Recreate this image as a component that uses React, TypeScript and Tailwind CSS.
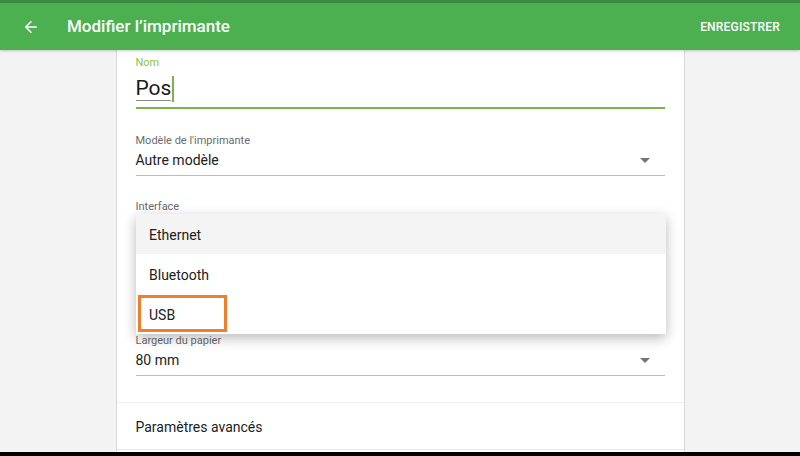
import { ArrowLeft } from "lucide-react";

const font = { fontFamily: "Roboto, 'Liberation Sans', sans-serif" };

function Caret() {
  return (
    <svg width="10" height="5" viewBox="0 0 10 5" className="shrink-0">
      <path d="M0 0 L10 0 L5 5 Z" fill="#757575" />
    </svg>
  );
}

function SelectField({ label, value }: { label: string; value?: string }) {
  return (
    <div>
      <div className="h-[14px] text-[11px] leading-[14px] text-[#6b6b6b]">{label}</div>
      <div className="mt-[2px] h-[20px] flex items-center justify-between pr-[15px]">
        <span className="text-[14px] text-[#212121]">{value}</span>
        <Caret />
      </div>
      <div className="mt-[5px] h-px bg-[#bdbdbd]" />
    </div>
  );
}

const options = ["Ethernet", "Bluetooth", "USB"];

export default function App() {
  return (
    <div
      className="w-[800px] h-[456px] bg-[#f3f3f3] flex flex-col overflow-hidden relative"
      style={font}
    >
      <div className="h-[3px] bg-[#3b8d3f] shrink-0" />
      {/* App bar */}
      <header className="h-[47px] shrink-0 bg-[#4caf50] flex items-center text-white shadow-[0_1px_3px_rgba(0,0,0,0.2)] relative z-10">
        <ArrowLeft className="ml-[22px] w-[18px] h-[18px]" strokeWidth={2} />
        <h1 className="ml-[27px] text-[17px] font-medium">Modifier l’imprimante</h1>
        <button type="button" className="ml-auto mr-[20px] text-[12px] font-medium tracking-[0.2px]">
          ENREGISTRER
        </button>
      </header>

      <div className="flex-1 flex justify-center min-h-0">
        <div className="w-[569px] bg-white border-x border-[#d9d9d9] px-[19px] pt-[6px] flex flex-col">
          {/* Nom */}
          <div>
            <div className="h-[14px] text-[11px] leading-[14px] text-[#8bc34a]">Nom</div>
            <div className="h-[37px] flex items-center">
              <span className="text-[21px] text-[#1a1a1a] border-b border-[#8a8a8a] leading-[24px]">Pos</span>
              <span className="ml-[1px] w-[2px] h-[26px] bg-[#7cb342]" />
            </div>
            <div className="h-[2px] bg-[#7cb342]" />
          </div>

          <div className="mt-[25px]">
            <SelectField label="Modèle de l'imprimante" value="Autre modèle" />
          </div>
          <div className="mt-[24px]">
            <SelectField label="Interface" />
          </div>
          <div className="h-[92px]" />
          <SelectField label="Largeur du papier" value="80 mm" />

          <div className="mt-[26px] -mx-[19px] border-t border-[#eeeeee] h-[48px] flex items-center px-[19px] pt-[2px] border-b border-b-[#e6e6e6]">
            <span className="text-[14px] text-[#212121]">Paramètres avancés</span>
          </div>
        </div>
      </div>
      <div className="h-[4px] bg-black shrink-0" />

      {/* Open dropdown menu */}
      <ul className="absolute left-[136px] top-[214px] w-[530px] bg-white shadow-[0_4px_12px_rgba(0,0,0,0.28)] z-20">
        {options.map((o, i) => (
          <li
            key={o}
            className={
              "h-[40px] flex items-center px-[13px] pt-[2px] text-[14px] text-[#212121] relative " +
              (i === 0 ? "bg-[#f4f4f4]" : "bg-white")
            }
          >
            {o}
            {o === "USB" && (
              <span className="absolute left-[2px] top-[1px] w-[89px] h-[37px] border-[3px] border-[#ef7f2c]" />
            )}
          </li>
        ))}
      </ul>
    </div>
  );
}
